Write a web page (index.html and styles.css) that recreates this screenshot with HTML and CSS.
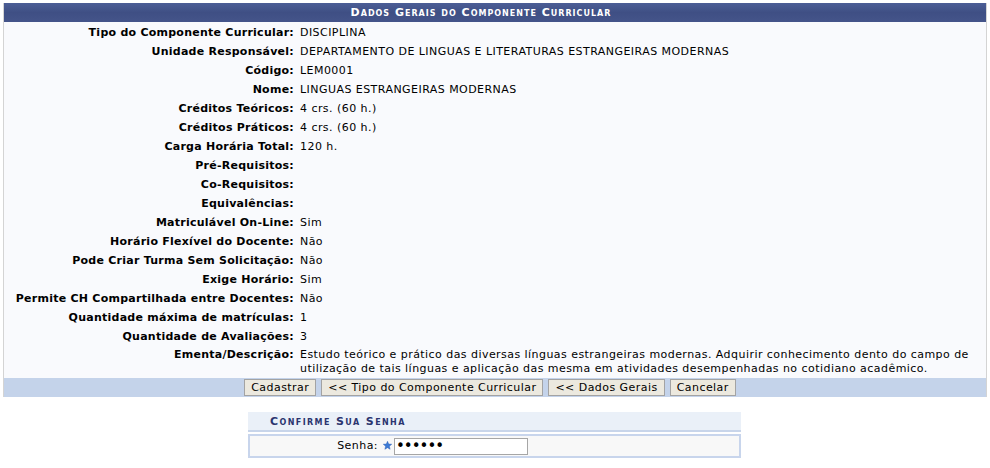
FILE: index.html
```html
<!doctype html>
<html>
<head>
<meta charset="utf-8">
<title>Dados Gerais do Componente Curricular</title>
<link rel="stylesheet" href="styles.css">
</head>
<body>
<div class="formulario">
    <div class="caption">Dados Gerais do Componente Curricular</div>
    <dl class="dados">
        <dt>Tipo do Componente Curricular:</dt><dd>DISCIPLINA</dd>
        <dt>Unidade Responsável:</dt><dd>DEPARTAMENTO DE LINGUAS E LITERATURAS ESTRANGEIRAS MODERNAS</dd>
        <dt>Código:</dt><dd>LEM0001</dd>
        <dt>Nome:</dt><dd>LINGUAS ESTRANGEIRAS MODERNAS</dd>
        <dt>Créditos Teóricos:</dt><dd>4 crs. (60 h.)</dd>
        <dt>Créditos Práticos:</dt><dd>4 crs. (60 h.)</dd>
        <dt>Carga Horária Total:</dt><dd>120 h.</dd>
        <dt>Pré-Requisitos:</dt><dd></dd>
        <dt>Co-Requisitos:</dt><dd></dd>
        <dt>Equivalências:</dt><dd></dd>
        <dt>Matriculável On-Line:</dt><dd>Sim</dd>
        <dt>Horário Flexível do Docente:</dt><dd>Não</dd>
        <dt>Pode Criar Turma Sem Solicitação:</dt><dd>Não</dd>
        <dt>Exige Horário:</dt><dd>Sim</dd>
        <dt>Permite CH Compartilhada entre Docentes:</dt><dd>Não</dd>
        <dt>Quantidade máxima de matrículas:</dt><dd>1</dd>
        <dt>Quantidade de Avaliações:</dt><dd>3</dd>
        <dt class="ementa">Ementa/Descrição:</dt><dd class="ementa">Estudo teórico e prático das diversas línguas estrangeiras modernas. Adquirir conhecimento dento do campo de utilização de tais línguas e aplicação das mesma em atividades desempenhadas no cotidiano acadêmico.</dd>
    </dl>
    <div class="acoes">
        <button type="button">Cadastrar</button>
        <button type="button">&lt;&lt; Tipo do Componente Curricular</button>
        <button type="button">&lt;&lt; Dados Gerais</button>
        <button type="button">Cancelar</button>
    </div>
</div>

<div class="senha">
    <div class="senha-cap">Confirme Sua Senha</div>
    <div class="senha-body">
        <label for="senha">Senha:</label>
        <svg class="obrigatorio" width="9" height="9" viewBox="0 0 10 10"><polygon points="5,0.3 6.3,3.4 9.7,3.6 7.1,5.8 7.9,9.2 5,7.4 2.1,9.2 2.9,5.8 0.3,3.6 3.7,3.4" fill="#3d7bd6" stroke="#2a5fb4" stroke-width="0.5"/></svg>
        <input type="password" id="senha" value="123456">
    </div>
</div>
</body>
</html>
```

FILE: styles.css
```css
body,div,dl,dt,dd{margin:0;padding:0;}
body{background:#fff;font:11px/14px "DejaVu Sans",Verdana,sans-serif;color:#000;letter-spacing:0.45px;}

.formulario{margin:3px 3px 0 3px;width:984px;background:#f9fafd;border-left:1px solid #d4d4d4;border-right:1px solid #d4d4d4;box-sizing:border-box;}
.formulario .caption{height:19px;line-height:19px;text-align:center;padding-right:28px;color:#fff;font-weight:bold;font-variant:small-caps;letter-spacing:1px;background:linear-gradient(#4c5e96,#3f4f84 50%,#44548a);}

.dados{display:grid;grid-template-columns:293px 1fr;padding-top:1px;}
.dados dt{text-align:right;font-weight:bold;letter-spacing:0.25px;padding:2px 3px 2px 0;line-height:15px;}
.dados dd{padding:2px 8px 2px 3px;line-height:15px;}
.dados .ementa{line-height:14px;}

.acoes{display:flex;justify-content:center;gap:5px;height:19px;padding:1px 10px 0 0;box-sizing:border-box;background:#c4d3ea;}
.acoes button{font:11px "DejaVu Sans",Verdana,sans-serif;letter-spacing:0.45px;height:17px;padding:0 6px;background:#ece9df;border:1px solid #a3a3a3;color:#000;}

.senha{width:493px;margin:15px 0 0 248px;}
.senha-cap{height:18px;line-height:19px;padding-left:22px;background:#eaf0f8;border-bottom:2px solid #c8d5ea;color:#2b356f;font-weight:bold;font-variant:small-caps;letter-spacing:1.4px;}
.senha-body{margin-top:2px;height:24px;display:flex;align-items:center;background:#f8f8f8;border:2px solid #c8d5ec;box-sizing:border-box;}
.senha-body label{width:128px;text-align:right;}
.senha-body .obrigatorio{margin:-2px 2px 0 5px;}
.senha-body input{width:134px;height:17px;box-sizing:border-box;border:1px solid #a6a6a6;padding:0 1px;font:15px/15px "DejaVu Sans",Verdana,sans-serif;letter-spacing:-1px;background:#fff;}
```
